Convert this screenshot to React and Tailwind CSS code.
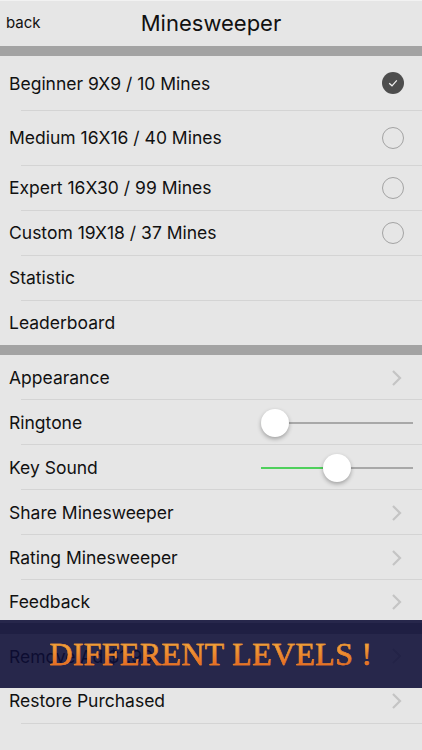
function Radio({ checked }) {
  if (checked) {
    return (
      <div className="w-[22px] h-[22px] rounded-full bg-[#4d4d4d] flex items-center justify-center">
        <svg width="12" height="12" viewBox="0 0 12 12" fill="none" stroke="#f2f2f2" strokeWidth="1.2">
          <path d="M2.2 6.2 L5 8.8 L9.8 3.4" />
        </svg>
      </div>
    );
  }
  return <div className="w-[22px] h-[22px] rounded-full border border-[#a3a3a3]" />;
}

function Chevron() {
  return (
    <svg width="12" height="18" viewBox="0 0 12 18" fill="none" stroke="#c4c4c4" strokeWidth="2.2" className="mr-[20px]">
      <path d="M3 2 L10 9 L3 16" />
    </svg>
  );
}

function Slider({ percent }) {
  return (
    <div className="relative w-[152px] h-[2px] bg-[#a8a8a8] mr-[9px]">
      <div className="absolute left-0 top-0 h-[2px] bg-[#4fd05c]" style={{ width: `${percent}%` }} />
      <div
        className="absolute top-[-13px] w-[28px] h-[28px] rounded-full bg-white shadow-[0_2px_4px_rgba(0,0,0,0.3)]"
        style={{ left: `${(percent / 100) * 152 - 14}px` }}
      />
    </div>
  );
}

function Row({ label, height = 'h-[45px]', right, line = 'bottom-0', radio = false, nudge = 'pt-[1px]' }) {
  return (
    <div className={`${height} relative flex items-center justify-between pl-[9px]`}>
      <span className={`text-[17.5px] text-[#111] ${nudge}`}>{label}</span>
      {radio ? <div className="mr-[18px]">{right}</div> : right}
      {line && <div className={`absolute ${line} left-[21px] right-0 h-px bg-[#d4d4d4]`} />}
    </div>
  );
}

export default function App() {
  return (
    <div className="relative w-[422px] h-[750px] overflow-hidden bg-[#e6e6e6] font-['Inter','Liberation_Sans',sans-serif]">
      {/* Header */}
      <div className="h-[46px] relative flex items-center justify-center border-t border-[#f2f2f2]">
        <span className="absolute left-[6px] text-[15px] text-[#111]">back</span>
        <span className="text-[22px] text-[#111]">Minesweeper</span>
      </div>
      <div className="h-[10px] bg-[#a3a3a3]" />

      <Row label="Beginner 9X9 / 10 Mines" height="h-[54px]" right={<Radio checked />} radio line="bottom-[-1px]" nudge="pt-[2px]" />
      <Row label="Medium 16X16 / 40 Mines" height="h-[55px]" right={<Radio />} radio line="bottom-[-1px]" nudge="pt-[2px]" />
      <Row label="Expert 16X30 / 99 Mines" right={<Radio />} radio line="bottom-[-1px]" nudge="pt-[2px]" />
      <Row label="Custom 19X18 / 37 Mines" right={<Radio />} radio line="bottom-[-1px]" nudge="pt-[2px]" />
      <Row label="Statistic" line="bottom-[-1px]" />
      <Row label="Leaderboard" line={null} />

      <div className="h-[10px] bg-[#a3a3a3]" />

      <Row label="Appearance" right={<Chevron />} />
      <Row label="Ringtone" right={<Slider percent={9} />} />
      <Row label="Key Sound" right={<Slider percent={50} />} />
      <Row label="Share Minesweeper" right={<Chevron />} />
      <Row label="Rating Minesweeper" right={<Chevron />} />
      <Row label="Feedback" height="h-[43px]" right={<Chevron />} line={null} nudge="pt-[2px]" />

      <div className="h-[11px] bg-[#a3a3a3]" />

      <Row label="Remove Ad $1.99" height="h-[44px]" right={<Chevron />} line={null} nudge="pt-[2px]" />
      <Row label="Restore Purchased" right={<Chevron />} line="bottom-[-1px]" nudge="pt-[2px]" />

      {/* Banner over the list, the rows show through it */}
      <div className="absolute left-0 right-0 top-[620px] h-[68px] bg-[#0d0d35]/[0.88] flex items-center justify-center">
        <span className="font-['Liberation_Serif',serif] text-[32px] leading-[26px] tracking-[0.3px] [-webkit-text-stroke:0.5px_#e8862c] whitespace-nowrap bg-gradient-to-b from-[#f0b040] to-[#e8601f] bg-clip-text text-transparent">
          DIFFERENT LEVELS !
        </span>
      </div>
    </div>
  );
}
